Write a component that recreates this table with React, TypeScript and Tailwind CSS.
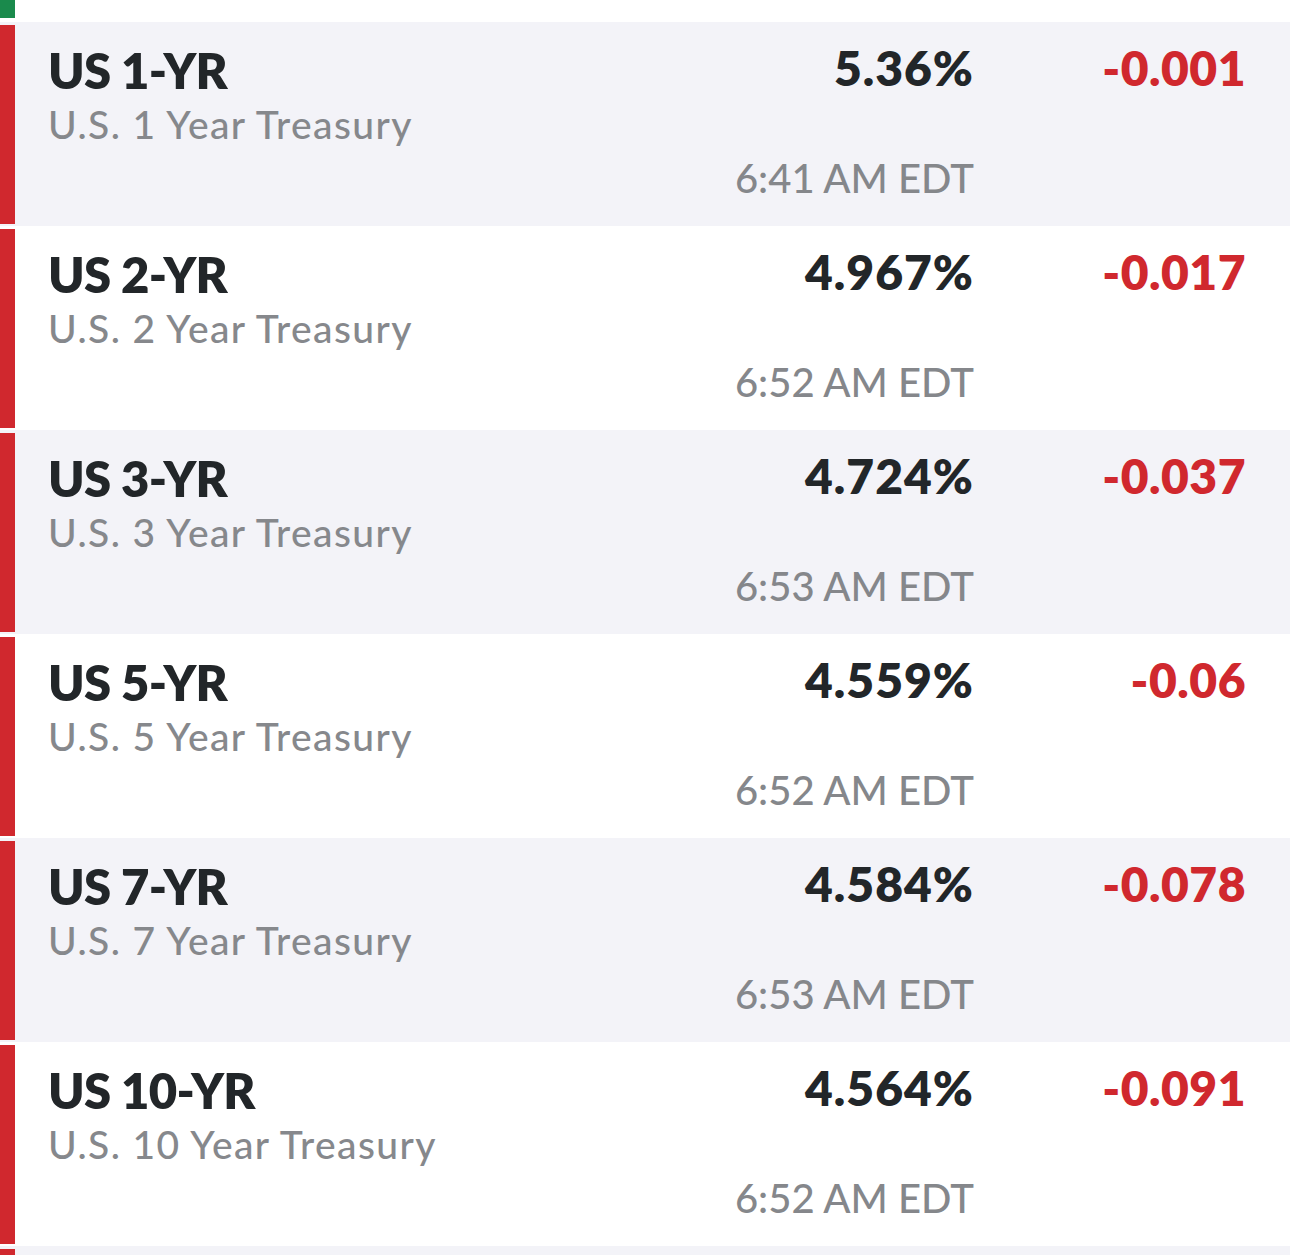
const rows = [
  { sym: "US 1-YR", name: "U.S. 1 Year Treasury", value: "5.36%", change: "-0.001", time: "6:41 AM EDT" },
  { sym: "US 2-YR", name: "U.S. 2 Year Treasury", value: "4.967%", change: "-0.017", time: "6:52 AM EDT" },
  { sym: "US 3-YR", name: "U.S. 3 Year Treasury", value: "4.724%", change: "-0.037", time: "6:53 AM EDT" },
  { sym: "US 5-YR", name: "U.S. 5 Year Treasury", value: "4.559%", change: "-0.06", time: "6:52 AM EDT" },
  { sym: "US 7-YR", name: "U.S. 7 Year Treasury", value: "4.584%", change: "-0.078", time: "6:53 AM EDT" },
  { sym: "US 10-YR", name: "U.S. 10 Year Treasury", value: "4.564%", change: "-0.091", time: "6:52 AM EDT" },
];

function QuoteRow({ row, shaded }: { row: (typeof rows)[number]; shaded: boolean }) {
  return (
    <div className={`flex h-[204px] ${shaded ? "bg-[#f3f3f8]" : "bg-white"}`}>
      {/* red = down on the day */}
      <div className="mt-[3px] mb-[2px] w-[15px] shrink-0 bg-[#d0282e]" />
      <div className="flex-1 pl-[33px] pt-[24px]">
        <div className="text-[49px] font-extrabold leading-[49px] tracking-[-0.7px] text-[#222629]">{row.sym}</div>
        <div className="mt-[10px] text-[39px] font-medium leading-[39px] tracking-[1.4px] text-[#86888c]">{row.name}</div>
      </div>
      <div className="flex flex-col items-end pt-[22px]">
        <div className="text-[48px] font-extrabold leading-[48px] tracking-[1px] text-[#222629]">{row.value}</div>
        <div className="mt-[66px] text-[40px] font-medium leading-[40px] text-[#85878b]">{row.time}</div>
      </div>
      <div className="w-[316px] shrink-0 pr-[44px] pt-[22px] text-right">
        <div className="text-[48px] font-extrabold leading-[48px] tracking-[0.5px] text-[#d0282e]">{row.change}</div>
      </div>
    </div>
  );
}

export default function App() {
  return (
    <div className="h-[1255px] w-[1290px] overflow-hidden bg-white font-['Lato',sans-serif]">
      {/* tail of the previous (green) row */}
      <div className="h-[22px]">
        <div className="h-[18px] w-[15px] bg-[#1a8a4c]" />
      </div>
      {rows.map((row, i) => (
        <QuoteRow key={row.sym} row={row} shaded={i % 2 === 0} />
      ))}
      <div className="flex h-[204px] bg-[#f3f3f8]">
        <div className="mt-[3px] w-[15px] bg-[#d0282e]" />
      </div>
    </div>
  );
}
